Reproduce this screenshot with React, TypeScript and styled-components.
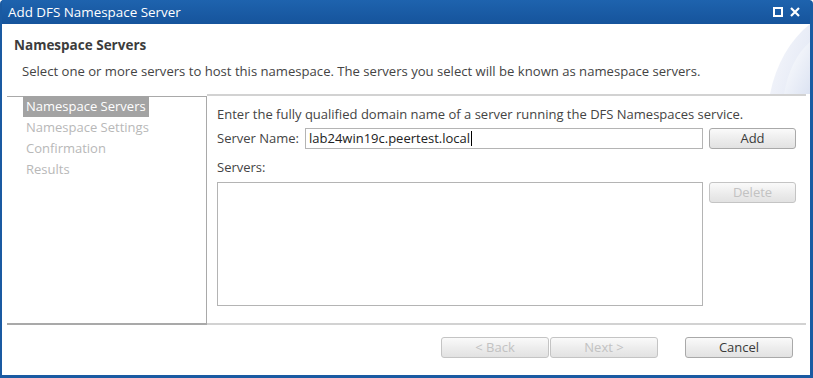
import React from "react";
import styled, { createGlobalStyle } from "styled-components";

const Global = createGlobalStyle`
  html, body { margin: 0; padding: 0; background: #ffffff; }
  body { font-family: "Open Sans", "Noto Sans", "DejaVu Sans", sans-serif; }
  * { box-sizing: border-box; }
`;

const Frame = styled.div`
  width: 813px;
  height: 378px;
  display: flex;
  flex-direction: column;
  background: #1a5aa2;
  padding: 0 3px 3px 2px;
  border-radius: 4px 4px 0 0;
  overflow: hidden;
`;

const TitleBar = styled.div`
  height: 24px;
  flex: none;
  display: flex;
  align-items: center;
  justify-content: space-between;
  padding: 0 10px 0 6px;
  background: linear-gradient(#1e63ae, #16549c);
  color: #ffffff;
  font-size: 13.4px;
`;

const TitleText = styled.span``;

const TitleIcons = styled.div`
  display: flex;
  align-items: center;
  gap: 7px;
`;

const Client = styled.div`
  flex: 1;
  background: #ffffff;
  display: flex;
  flex-direction: column;
  position: relative;
  overflow: hidden;
`;

const Swoosh = styled.svg`
  position: absolute;
  right: 0;
  top: 0;
`;

const Header = styled.div`
  height: 70px;
  flex: none;
  padding: 12px 0 0 12px;
  position: relative;
`;

const Heading = styled.div`
  font-weight: 700;
  font-size: 13.5px;
  line-height: 18px;
  color: #3c3c3c;
`;

const Subtitle = styled.div`
  margin-top: 8px;
  padding-left: 8px;
  font-size: 13.1px;
  line-height: 18px;
  color: #444444;
`;

const Body = styled.div`
  flex: none;
  height: 231px;
  margin: 0 4px 0 5px;
  display: flex;
  position: relative;
`;

const Nav = styled.div`
  width: 200px;
  flex: none;
  border-top: 1px solid #a9a9a9;
  border-right: 1px solid #a9a9a9;
  border-bottom: 2px solid #a9a9a9;
  margin-top: 2px;
  padding: 0 0 0 16px;
  display: flex;
  flex-direction: column;
  align-items: flex-start;
`;

const NavItem = styled.div<{ $active?: boolean }>`
  height: 21px;
  line-height: 21px;
  padding: 0 3px;
  font-size: 13px;
  color: ${(p) => (p.$active ? "#ffffff" : "#b8b8b8")};
  background: ${(p) => (p.$active ? "#a3a3a3" : "transparent")};
  margin-top: ${(p) => (p.$active ? "-1px" : "0")};
`;

const Content = styled.div`
  flex: 1;
  border-top: 2px solid #d2d2d2;
  border-bottom: 2px solid #d2d2d2;
  padding: 9px 0 0 10px;
  display: flex;
  flex-direction: column;
`;

const Text = styled.div`
  font-size: 13px;
  line-height: 18px;
  color: #444444;
`;

const Row = styled.div`
  display: flex;
  align-items: flex-start;
  gap: 6px;
`;

const Label = styled.label`
  font-size: 13px;
  line-height: 20px;
  color: #444444;
  white-space: nowrap;
  width: 82px;
  flex: none;
`;

const Input = styled.div`
  width: 398px;
  height: 21px;
  border: 1px solid #b4b4b4;
  font-size: 13px;
  line-height: 19px;
  padding: 0 3px;
  color: #222222;
  display: flex;
  align-items: center;
`;

const Caret = styled.span`
  display: inline-block;
  width: 1px;
  height: 15px;
  background: #000000;
  margin-left: 1px;
`;

const ListBox = styled.div`
  width: 486px;
  height: 124px;
  border: 1px solid #b4b4b4;
  flex: none;
`;

const Button = styled.button<{ $disabled?: boolean; $w?: number }>`
  width: ${(p) => p.$w ?? 87}px;
  height: 21px;
  flex: none;
  margin: 0;
  padding: 0;
  border: 1px solid ${(p) => (p.$disabled ? "#c4c4c4" : "#a9a9a9")};
  border-radius: 3px;
  background: linear-gradient(#fafafa, #ececec 55%, #e2e2e2);
  color: ${(p) => (p.$disabled ? "#c2c2c2" : "#3a3a3a")};
  font-family: inherit;
  font-size: 13px;
  line-height: 19px;
  cursor: default;
`;

const ServersLabel = styled(Text)`
  margin-top: 9px;
`;

const ListRow = styled(Row)`
  margin-top: 6px;
`;

const FirstRow = styled(Row)`
  margin-top: 5px;
`;

const Footer = styled.div`
  flex: 1;
  display: flex;
  justify-content: flex-end;
  align-items: flex-start;
  padding: 12px 17px 0 0;
`;

const BackNext = styled.div`
  display: flex;
  gap: 1px;
  margin-right: 27px;
`;

export default function App() {
  return (
    <>
      <Global />
      <Frame>
        <TitleBar>
          <TitleText>Add DFS Namespace Server</TitleText>
          <TitleIcons>
            <svg width="10" height="10" viewBox="0 0 10 10">
              <rect x="1" y="1" width="8" height="8" fill="none" stroke="#fff" strokeWidth="2" />
            </svg>
            <svg width="10" height="10" viewBox="0 0 10 10">
              <path d="M1 1 L9 9 M9 1 L1 9" stroke="#fff" strokeWidth="2.2" />
            </svg>
          </TitleIcons>
        </TitleBar>
        <Client>
          <Swoosh width="44" height="70" viewBox="0 0 44 70">
            <defs>
              <linearGradient id="sw1" x1="0" y1="0" x2="1" y2="1">
                <stop offset="0" stopColor="#ffffff" />
                <stop offset="1" stopColor="#dce3f2" />
              </linearGradient>
              <linearGradient id="sw2" x1="0" y1="0" x2="1" y2="0.6">
                <stop offset="0" stopColor="#f7f8fc" />
                <stop offset="1" stopColor="#e4e9f5" />
              </linearGradient>
            </defs>
            <path d="M44 0 L44 70 L4 70 C10 40 24 16 44 0 Z" fill="url(#sw2)" />
            <path d="M44 18 L44 70 L18 70 C22 48 30 30 44 18 Z" fill="url(#sw1)" />
          </Swoosh>
          <Header>
            <Heading>Namespace Servers</Heading>
            <Subtitle>
              Select one or more servers to host this namespace. The servers you select will be known as namespace servers.
            </Subtitle>
          </Header>
          <Body>
            <Nav>
              <NavItem $active>Namespace Servers</NavItem>
              <NavItem>Namespace Settings</NavItem>
              <NavItem>Confirmation</NavItem>
              <NavItem>Results</NavItem>
            </Nav>
            <Content>
              <Text>Enter the fully qualified domain name of a server running the DFS Namespaces service.</Text>
              <FirstRow>
                <Label>Server Name:</Label>
                <Input>
                  lab24win19c.peertest.local
                  <Caret />
                </Input>
                <Button>Add</Button>
              </FirstRow>
              <ServersLabel>Servers:</ServersLabel>
              <ListRow>
                <ListBox />
                <Button $disabled>Delete</Button>
              </ListRow>
            </Content>
          </Body>
          <Footer>
            <BackNext>
              <Button $disabled $w={108}>&lt; Back</Button>
              <Button $disabled $w={108}>Next &gt;</Button>
            </BackNext>
            <Button $w={108}>Cancel</Button>
          </Footer>
        </Client>
      </Frame>
    </>
  );
}
